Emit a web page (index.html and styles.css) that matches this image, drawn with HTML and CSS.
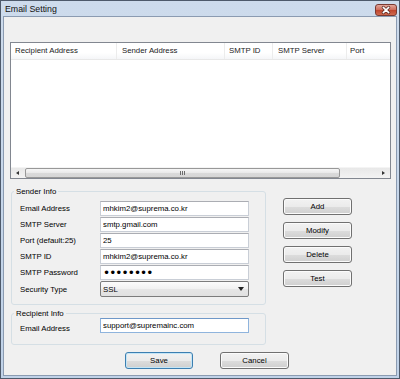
FILE: index.html
```html
<!DOCTYPE html>
<html lang="en">
<head>
  <meta charset="UTF-8">
  <title>Email Setting</title>
  <link rel="stylesheet" href="styles.css">
</head>
<body>
  <div class="window">
    <div class="titlebar">
      <span class="title">Email Setting</span>
      <button class="close" title="Close">
        <svg width="22" height="12" viewBox="0 0 22 12">
          <path d="M8 3.2 L14 8.8 M14 3.2 L8 8.8" stroke="#5a2a24" stroke-width="3.4" stroke-linecap="round"/>
          <path d="M8 3.2 L14 8.8 M14 3.2 L8 8.8" stroke="#fff" stroke-width="1.8" stroke-linecap="round"/>
        </svg>
      </button>
    </div>

    <div class="client">
      <!-- Mail list -->
      <div class="listview">
        <div class="lv-header">
          <div class="col c1">Recipient Address</div>
          <div class="col c2">Sender Address</div>
          <div class="col c3">SMTP ID</div>
          <div class="col c4">SMTP Server</div>
          <div class="col c5">Port</div>
        </div>
        <div class="lv-body"></div>
        <div class="hscroll">
          <span class="sb-btn"><span class="arrow-left"></span></span>
          <div class="sb-track">
            <div class="sb-thumb"><span class="grip"></span></div>
          </div>
          <span class="sb-btn"><span class="arrow-right"></span></span>
        </div>
      </div>

      <div class="lower">
        <div class="groups">
          <!-- Sender -->
          <fieldset class="group sender">
            <legend>Sender Info</legend>
            <div class="field">
              <label>Email Address</label>
              <input type="text" value="mhkim2@suprema.co.kr">
            </div>
            <div class="field">
              <label>SMTP Server</label>
              <input type="text" value="smtp.gmail.com">
            </div>
            <div class="field">
              <label>Port (default:25)</label>
              <input type="text" value="25">
            </div>
            <div class="field">
              <label>SMTP ID</label>
              <input type="text" value="mhkim2@suprema.co.kr">
            </div>
            <div class="field">
              <label>SMTP Password</label>
              <input type="password" class="password" value="12345678">
            </div>
            <div class="field">
              <label>Security Type</label>
              <div class="combo">
                <select>
                  <option>SSL</option>
                  <option>TLS</option>
                  <option>None</option>
                </select>
              </div>
            </div>
          </fieldset>

          <!-- Recipient -->
          <fieldset class="group recipient">
            <legend>Recipient Info</legend>
            <div class="field">
              <label class="low">Email Address</label>
              <input type="text" class="focused" value="support@supremainc.com">
            </div>
          </fieldset>
        </div>

        <div class="side-buttons">
          <button class="btn">Add</button>
          <button class="btn">Modify</button>
          <button class="btn">Delete</button>
          <button class="btn">Test</button>
        </div>
      </div>

      <div class="dialog-buttons">
        <button class="btn default save">Save</button>
        <button class="btn cancel">Cancel</button>
      </div>
    </div>
  </div>
</body>
</html>
```

FILE: styles.css
```css
* {
  box-sizing: border-box;
  margin: 0;
  padding: 0;
}

body {
  width: 400px;
  height: 379px;
  overflow: hidden;
  font-family: "Liberation Sans", Arial, sans-serif;
  font-size: 7.8px;
  color: #000;
  background: #bfd0e6;
}

.window {
  width: 400px;
  height: 379px;
  border: 1px solid #4e5a6b;
  padding: 0 2px 2px;
  background: linear-gradient(#cddbec, #c0d2e8);
  display: flex;
  flex-direction: column;
}

/* Title bar */
.titlebar {
  height: 15px;
  display: flex;
  align-items: flex-start;
}

.title {
  font-size: 8.8px;
  line-height: 10px;
  padding: 3px 0 0 2px;
  color: #111;
}

.close {
  margin-left: auto;
  margin-top: 3px;
  width: 22px;
  height: 12px;
  border: 1px solid #7a3a32;
  border-radius: 3px;
  background: linear-gradient(#e3a79c, #d0705f 45%, #c0472f 55%, #cf6a4f);
  display: flex;
  align-items: center;
  justify-content: center;
}

.close svg {
  display: block;
}

/* Client area */
.client {
  flex: 1;
  background: #f0f0f0;
  border: 1px solid #8b9bb1;
  display: flex;
  flex-direction: column;
}

/* List view */
.listview {
  margin: 25px 0 0 6px;
  width: 381px;
  height: 137px;
  border: 1px solid #828790;
  background: #fff;
  display: flex;
  flex-direction: column;
}

.lv-header {
  display: flex;
  height: 17px;
  border-bottom: 1px solid #e8e8e8;
  background: linear-gradient(#fff, #fff 60%, #f5f6f8);
}

.col {
  line-height: 16px;
  padding-left: 4px;
  border-right: 1px solid #ececec;
  white-space: nowrap;
  color: #1a1a1a;
}

.c1 { width: 106px; }
.c2 { width: 108px; padding-left: 5px; }
.c3 { width: 48px; }
.c4 { width: 74px; padding-left: 5px; }
.c5 { flex: 1; border-right: none; padding-left: 3px; }

.lv-body {
  flex: 1;
}

.hscroll {
  height: 11px;
  display: flex;
  background: linear-gradient(#e8e8e8, #f3f3f3);
  border-top: 1px solid #f4f4f4;
}

.sb-btn {
  width: 13px;
  display: flex;
  align-items: center;
  justify-content: center;
}

.arrow-left {
  border-top: 2.5px solid transparent;
  border-bottom: 2.5px solid transparent;
  border-right: 3px solid #333;
}

.arrow-right {
  border-top: 2.5px solid transparent;
  border-bottom: 2.5px solid transparent;
  border-left: 3px solid #333;
}

.sb-track {
  flex: 1;
  padding: 0 1px;
}

.sb-thumb {
  width: 315px;
  height: 10px;
  border: 1px solid #989898;
  border-radius: 2px;
  background: linear-gradient(#f6f6f6, #e9e9e9 50%, #dadada 51%, #d6d6d6);
  display: flex;
  align-items: center;
  justify-content: center;
}

.grip {
  width: 5px;
  height: 4px;
  background: repeating-linear-gradient(90deg, #6d6d6d 0 1px, transparent 1px 2px);
}

/* Lower section */
.lower {
  display: flex;
  margin-top: 8px;
}

.groups {
  margin-left: 7px;
  width: 255px;
}

.group {
  border: 1px solid #d5dfe5;
  border-radius: 3px;
  padding: 5px 15px 7px 8px;
}

.group legend {
  line-height: 9px;
  margin-left: -6px;
  padding: 0 2px;
}

.recipient {
  margin-top: 4px;
  padding-top: 0;
  padding-bottom: 11px;
}

.field {
  display: flex;
  align-items: center;
  height: 15px;
  margin-bottom: 1px;
}

.field:last-child {
  margin-bottom: 0;
}

.field label {
  width: 80px;
  white-space: nowrap;
}

.field label.low {
  padding-top: 5px;
}

.field input {
  width: 149px;
  height: 15px;
  border: 1px solid #c9ced6;
  border-top-color: #abadb3;
  background: #fff;
  padding: 0 2px;
  font: inherit;
  color: #000;
  outline: none;
}

.field input.password {
  font-family: "DejaVu Sans", sans-serif;
  font-size: 12px;
  letter-spacing: -0.9px;
}

.field input.focused {
  border-color: #8fb4dd;
  border-top-color: #6f98c8;
}

.field:has(.combo) {
  height: 16px;
}

.combo {
  position: relative;
  width: 149px;
  height: 16px;
}

.combo select {
  width: 100%;
  height: 100%;
  appearance: none;
  -webkit-appearance: none;
  border: 1px solid #7c7c7c;
  border-radius: 2px;
  background: linear-gradient(#fbfbfb, #f1f1f1 50%, #e6e6e6 51%, #e1e1e1);
  padding: 0 2px;
  font: inherit;
  color: #000;
  outline: none;
}

.combo::after {
  content: "";
  position: absolute;
  right: 5px;
  top: 6px;
  border-left: 3px solid transparent;
  border-right: 3px solid transparent;
  border-top: 4px solid #222;
  pointer-events: none;
}

/* Buttons */
.btn {
  height: 17px;
  border: 1px solid #707070;
  border-radius: 3px;
  background: linear-gradient(#f2f2f2, #ebebeb 50%, #dddddd 51%, #cfcfcf);
  box-shadow: inset 0 0 0 1px #fbfbfb;
  font: inherit;
  color: #000;
  text-align: center;
  cursor: pointer;
}

.btn:hover {
  background: linear-gradient(#eaf6fd, #d9f0fc 50%, #bee6fd 51%, #a7d9f5);
}

.btn.default {
  border-color: #3c7fb1;
  box-shadow: inset 0 0 0 1px #c4e5f6;
}

.side-buttons {
  margin-left: 17px;
  margin-top: 11px;
  width: 69px;
  display: flex;
  flex-direction: column;
  gap: 7px;
}

.dialog-buttons {
  display: flex;
  margin-top: 7px;
}

.save {
  margin-left: 121px;
  width: 68px;
}

.cancel {
  margin-left: 27px;
  width: 69px;
}
```
